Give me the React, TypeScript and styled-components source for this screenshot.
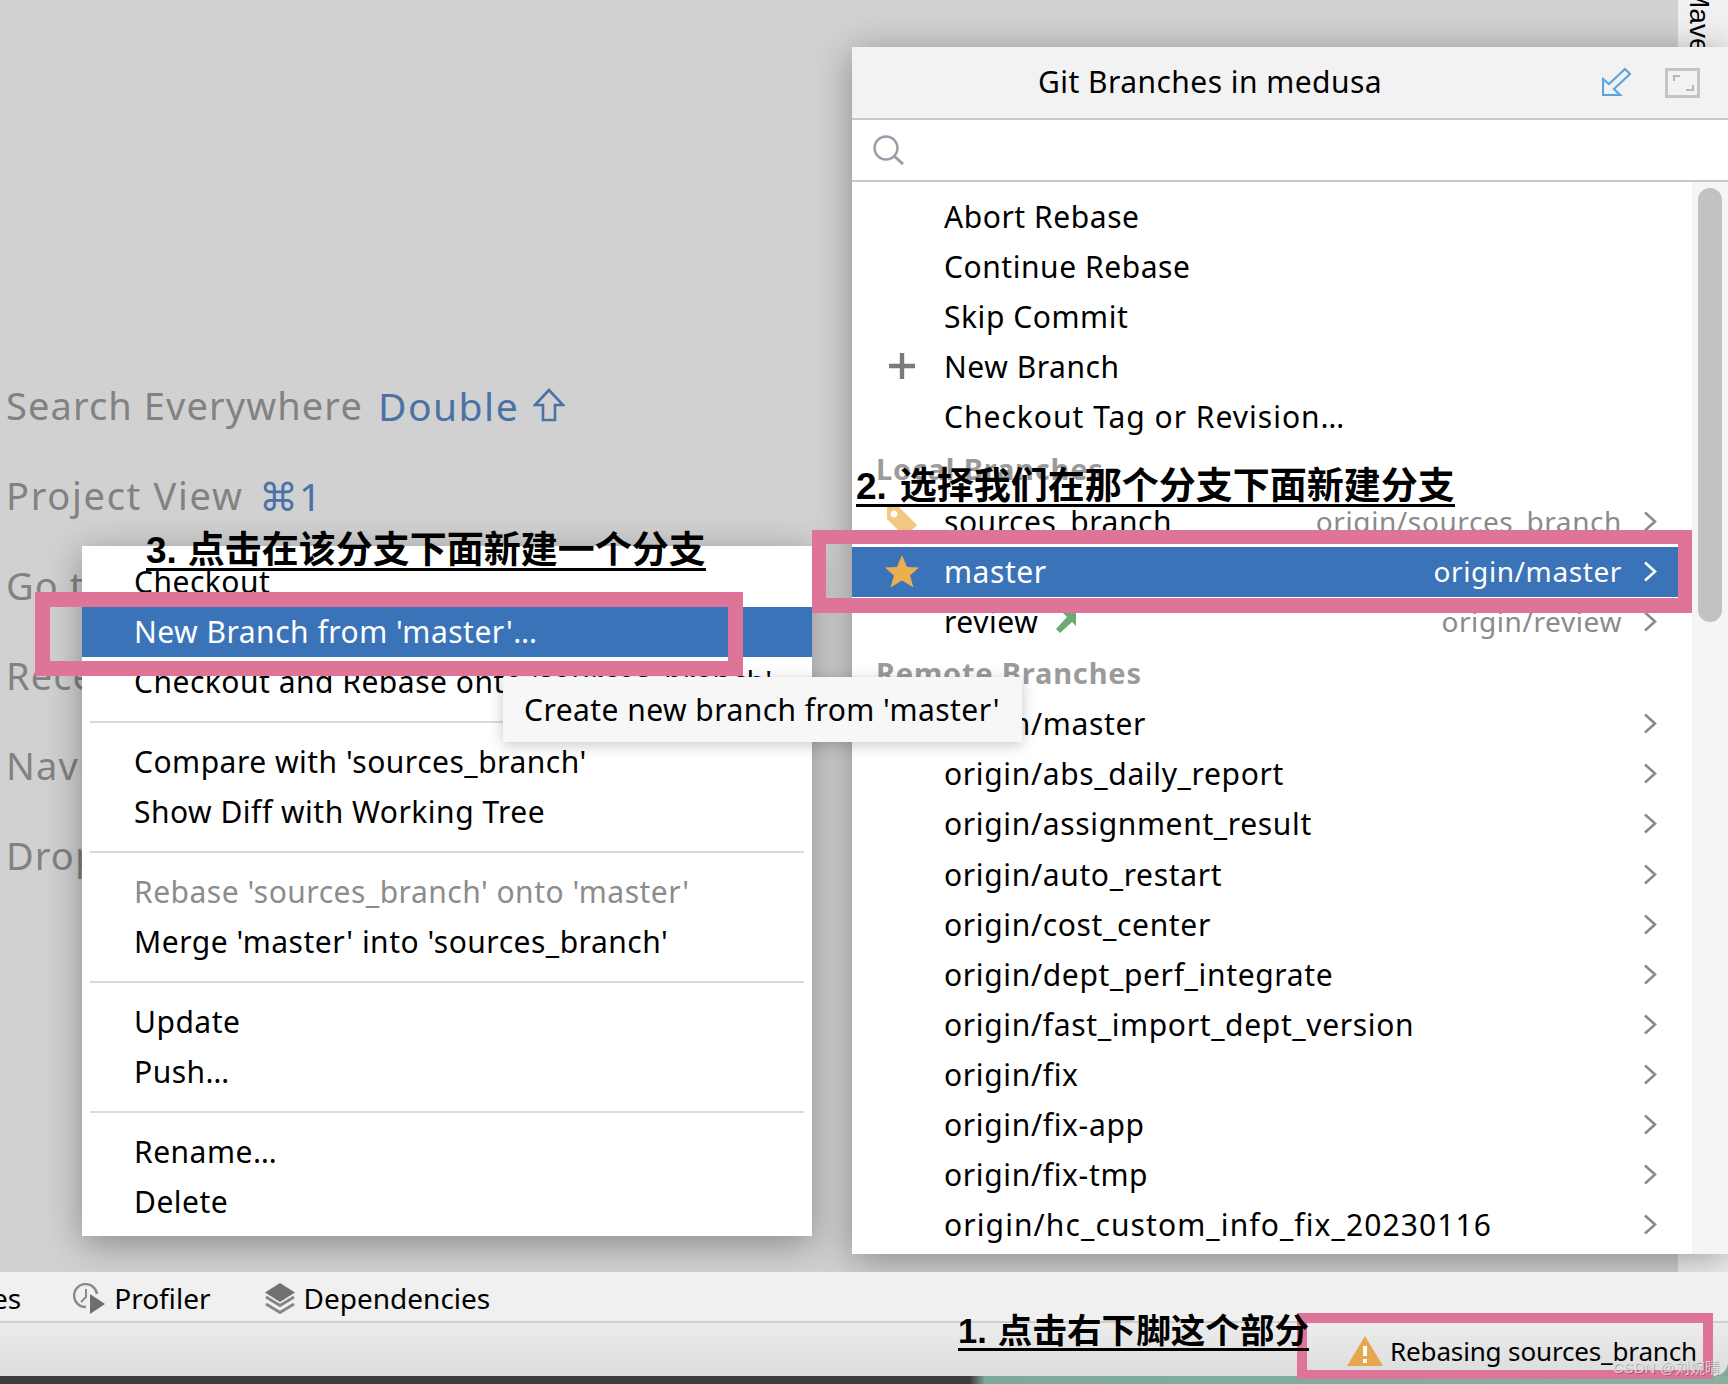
import React from "react";
import styled, { createGlobalStyle } from "styled-components";

const UI = `"Noto Sans", "Open Sans", sans-serif`;
const Global = createGlobalStyle`
  html, body { margin: 0; padding: 0; background: #d0d0d0; }
  #root { width: 1728px; height: 1384px; overflow: hidden; }
`;

const Page = styled.div`
  position: relative; width: 1728px; height: 1384px; overflow: hidden;
  display: flex; flex-direction: column; font-family: ${UI}; color: #000; background: #7fa898;
`;
const Workspace = styled.main`
  flex: 1; min-height: 0; background: #d1d1d1; display: flex;
`;
const Hints = styled.div`
  flex: 1; min-width: 0; padding: 360px 0 0 6px; display: flex; flex-direction: column;
`;
const Hint = styled.div<{ $track?: number }>`
  height: 90px; display: flex; align-items: center; gap: 15px; white-space: nowrap;
  font-size: 38px; letter-spacing: ${p => p.$track ?? 1.1}px; color: #828282;
`;
const Key = styled.span`
  color: #4a72a6; display: inline-flex; align-items: center; gap: 14px; letter-spacing: 1.5px; font-size: 39px;
`;
const SideStrip = styled.aside`
  position: relative; width: 50px; flex: none; background: #f0f0f0; overflow: hidden;
  font-family: "Liberation Sans", sans-serif; font-size: 28px;
`;
const MavenLabel = styled.span`
  position: absolute; left: 4px; top: -15px; writing-mode: vertical-rl; line-height: 34px;
`;
const ToolBar = styled.div`
  position: relative; z-index: 1; height: 51px; box-sizing: border-box; background: #f0f0f0; border-bottom: 2px solid #cfcfcf;
  display: flex; align-items: center; font-size: 28px; padding-top: 3px;
`;
const ToolItem = styled.div<{ $ml: number }>`
  margin-left: ${p => p.$ml}px; display: flex; align-items: center; gap: 9px; white-space: nowrap;
`;
const StatusBar = styled.div`
  position: relative; z-index: 1; height: 53px; box-sizing: border-box; background: linear-gradient(#ececec, #dcdcdc);
  border-bottom-right-radius: 14px;
  display: flex; align-items: center; justify-content: flex-end; padding: 3px 31px 0 0; gap: 7px;
  font-size: 26px; letter-spacing: -0.15px;
`;
const Strip = styled.div`
  height: 8px; background: linear-gradient(90deg, #3c3c3c 0 970px, #7fa898 985px, #86b3a0 100%);
`;
const Menu = styled.section`
  position: absolute; left: 82px; top: 546px; width: 730px; height: 690px; box-sizing: border-box;
  background: #fff; padding: 11px 0 10px; box-shadow: 0 8px 34px rgba(0,0,0,.34);
  font-size: 30px; letter-spacing: 0.5px;
`;
const MenuItem = styled.div<{ $active?: boolean; $disabled?: boolean }>`
  height: 50px; line-height: 50px; padding-left: 52px; white-space: nowrap;
  background: ${p => (p.$active ? "#3b73b8" : "transparent")};
  color: ${p => (p.$active ? "#fff" : p.$disabled ? "#8c8c8c" : "#000")};
`;
const Separator = styled.hr`
  margin: 14px 8px; border: 0; height: 2px; background: #d9d9d9;
`;
const Popup = styled.section`
  position: absolute; left: 852px; top: 47px; width: 876px; height: 1207px;
  display: flex; flex-direction: column; background: #fff; box-shadow: 0 6px 34px rgba(0,0,0,.34);
`;
const PopupHead = styled.header`
  height: 73px; box-sizing: border-box; flex: none; background: #f2f2f2; border-bottom: 2px solid #c8c8c8;
  display: flex; align-items: center; font-size: 30px; letter-spacing: 0.45px; padding-bottom: 3px;
`;
const PopupTitle = styled.div` margin-left: 186px; width: 564px; white-space: nowrap; `;
const HeadIcons = styled.div` display: flex; align-items: center; gap: 34px; margin-top: 3px; `;
const SearchBar = styled.div`
  height: 62px; box-sizing: border-box; flex: none; border-bottom: 2px solid #c8c8c8;
  display: flex; align-items: center; padding-left: 21px;
`;
const ListWrap = styled.div` flex: 1; min-height: 0; display: flex; `;
const List = styled.div`
  flex: 1; min-width: 0; padding-top: 9px; font-size: 30px; letter-spacing: 0.55px;
`;
const Track = styled.div` width: 36px; flex: none; background: #f5f5f5; padding: 6px 6px 0; box-sizing: border-box; `;
const Thumb = styled.div` height: 434px; border-radius: 12px; background: #c2c2c2; `;
const Row = styled.div<{ $active?: boolean; $track?: number }>`
  height: 50.1px; display: flex; align-items: center; white-space: nowrap;
  background: ${p => (p.$active ? "#3b73b8" : "transparent")};
  color: ${p => (p.$active ? "#fff" : "#000")};
  ${p => (p.$track ? `letter-spacing: ${p.$track}px;` : "")}
`;
const IconSlot = styled.div`
  width: 92px; flex: none; display: flex; justify-content: center; padding-left: 8px; box-sizing: border-box;
`;
const RowName = styled.div` display: flex; align-items: center; gap: 18px; flex: 1; `;
const Remote = styled.div<{ $active?: boolean }>`
  color: ${p => (p.$active ? "#fff" : "#8a8a8a")}; font-size: 28px; letter-spacing: 0.6px; line-height: 36px; margin-top: -2px;
`;
const ChevronSlot = styled.div` width: 56px; margin-right: 14px; flex: none; display: flex; justify-content: center; `;
const GroupTitle = styled.div<{ $h: number }>`
  height: ${p => p.$h}px; display: flex; align-items: center; padding-left: 24px; font-weight: 700;
  color: #9b9b9b; font-size: 29px; letter-spacing: 0.8px;
`;
const Tooltip = styled.div`
  position: absolute; left: 503px; top: 677px; width: 519px; height: 65px; box-sizing: border-box;
  background: #f7f7f7; display: flex; align-items: center; padding-left: 21px; white-space: nowrap;
  box-shadow: 0 3px 14px rgba(0,0,0,.22); font-size: 30px; letter-spacing: 0.45px;
`;
const PinkFrame = styled.div<{ $l: number; $t: number; $w: number; $h: number; $bx: number; $bt: number; $bb: number }>`
  position: absolute; left: ${p => p.$l}px; top: ${p => p.$t}px; width: ${p => p.$w}px; height: ${p => p.$h}px;
  box-sizing: border-box; border: solid #de7599; z-index: 2;
  border-width: ${p => p.$bt}px ${p => p.$bx}px ${p => p.$bb}px;
`;
const Note = styled.div<{ $l: number; $t: number; $size: number; $lh: number; $gap: number }>`
  position: absolute; z-index: 3; left: ${p => p.$l}px; top: ${p => p.$t}px; white-space: nowrap;
  font-family: "Liberation Sans", "Noto Sans CJK SC", sans-serif; font-weight: 700;
  font-size: ${p => p.$size}px; line-height: ${p => p.$lh}px;
  border-bottom: 3px solid #000; display: flex; gap: ${p => p.$gap}px;
`;
const Watermark = styled.div`
  position: absolute; z-index: 3; left: 1613px; top: 1360px; font-size: 14.5px; line-height: 16px; color: rgba(225,225,225,.85);
  white-space: nowrap; font-family: "Liberation Sans", "Noto Sans CJK SC", sans-serif; letter-spacing: .4px;
  text-shadow: 1px 1px 0 rgba(0,0,0,.25);
`;

const Chevron = ({ c = "#8a8a8a" }: { c?: string }) => (
  <svg width="14" height="21" viewBox="0 0 14 21"><path d="M2 1.5 L12 10.5 L2 19.5" fill="none" stroke={c} strokeWidth="2.6" /></svg>
);
const Star = () => (
  <svg width="34" height="33" viewBox="0 0 34 33"><path d="M17 0 L22 12 L34 12.5 L25 20.5 L28.5 32.5 L17 25.5 L5.5 32.5 L9 20.5 L0 12.5 L12 12 Z" fill="#ecaf50" /></svg>
);
const Tag = () => (
  <svg width="30" height="30" viewBox="0 0 30 30"><path fillRule="evenodd" d="M0 0 H12 L30 18 L18 30 L0 12 Z M7 3.5 a3.5 3.5 0 1 0 .01 0 Z" fill="#f2c77f" /></svg>
);
const Plus = () => (
  <svg width="26" height="26" viewBox="0 0 26 26"><path d="M13 0 V26 M0 13 H26" stroke="#7a7a7a" strokeWidth="4.4" /></svg>
);
const GreenArrow = () => (
  <svg width="21" height="24" viewBox="0 0 21 24"><path d="M5 1 H20 V16 L16 12 L4 23 L0 19 L11 7 Z" fill="#6aab73" /></svg>
);
const PinIcon = () => (
  <svg width="29" height="29" viewBox="-1 -1 29 29" fill="none" stroke="#5aa5db" strokeWidth="2.2">
    <path d="M22 0 L27 5 L11 20 L17 26 H0 V10 L6 15 Z" />
  </svg>
);
const ExpandIcon = () => (
  <svg width="35" height="30" viewBox="0 0 35 30" fill="none">
    <rect x="1.5" y="1.5" width="32" height="27" stroke="#c4c4c4" strokeWidth="3" /><path d="M9 13 V8 H15 M28 17 V22 H21" strokeWidth="2.2" stroke="#b8b8b8" />
  </svg>
);
const SearchIcon = () => (
  <svg width="31" height="30" viewBox="0 0 31 30" fill="none" stroke="#97a0a8" strokeWidth="2.4">
    <circle cx="13" cy="13" r="11.5" /><path d="M21 21 L30 29" strokeWidth="3" />
  </svg>
);
const ShiftIcon = () => (
  <svg width="32" height="34" viewBox="0 0 32 34" fill="none" stroke="#4a72a6" strokeWidth="2.6"><path d="M16 2 L30 17 H22 V32 H10 V17 H2 Z" /></svg>
);
const ProfilerIcon = () => (
  <svg width="32" height="31" viewBox="0 0 32 31" fill="none">
    <path d="M13 24 A 11.5 11.5 0 1 1 24 11" stroke="#8a8a8a" strokeWidth="2.4" />
    <path d="M13 6 V14 L8 19" stroke="#8a8a8a" strokeWidth="2" />
    <path d="M17 11 L32 21 L17 31 Z" fill="#6f6f6f" />
  </svg>
);
const DepsIcon = () => (
  <svg width="30" height="31" viewBox="0 0 30 31">
    <path d="M15 0 L30 9.5 L15 19 L0 9.5 Z" fill="#717171" />
    <path d="M1 14 L15 22.5 L29 14 M1 21 L15 29.5 L29 21" fill="none" stroke="#858585" strokeWidth="2.8" />
  </svg>
);
const Warning = () => (
  <svg width="36" height="30" viewBox="0 0 36 30"><path d="M18 0 L36 30 H0 Z" fill="#e3a850" /><path d="M16 10 H20 V20 H16 Z M16 23 H20 V27 H16 Z" fill="#fff" /></svg>
);

const topActions = ["Abort Rebase", "Continue Rebase", "Skip Commit", "New Branch", "Checkout Tag or Revision…"];
const remotes = ["origin/master", "origin/abs_daily_report", "origin/assignment_result", "origin/auto_restart", "origin/cost_center", "origin/dept_perf_integrate", "origin/fast_import_dept_version", "origin/fix", "origin/fix-app", "origin/fix-tmp", "origin/hc_custom_info_fix_20230116"];
const menuGroups = [
  ["Checkout", "New Branch from 'master'…", "Checkout and Rebase onto 'sources_branch'"],
  ["Compare with 'sources_branch'", "Show Diff with Working Tree"],
  ["Rebase 'sources_branch' onto 'master'", "Merge 'master' into 'sources_branch'"],
  ["Update", "Push…"],
  ["Rename…", "Delete"],
];

export default function App() {
  return (
    <Page>
      <Global />
      <Workspace>
        <Hints>
          <Hint>Search Everywhere <Key>Double <ShiftIcon /></Key></Hint>
          <Hint $track={1.7}>Project View <Key>⌘1</Key></Hint>
          <Hint>Go to File <Key>⇧⌘O</Key></Hint>
          <Hint>Recent Files <Key>⌘E</Key></Hint>
          <Hint>Navigation Bar <Key>⌘↑</Key></Hint>
          <Hint>Drop files here to open</Hint>
        </Hints>
        <SideStrip><MavenLabel>Maven</MavenLabel></SideStrip>
      </Workspace>
      <ToolBar>
        <ToolItem $ml={-37}>Files</ToolItem>
        <ToolItem $ml={52}><ProfilerIcon />Profiler</ToolItem>
        <ToolItem $ml={54}><DepsIcon />Dependencies</ToolItem>
      </ToolBar>
      <StatusBar><Warning />Rebasing sources_branch</StatusBar>
      <Strip />

      <Menu>
        {menuGroups.map((g, i) => (
          <React.Fragment key={i}>
            {i > 0 && <Separator />}
            {g.map(t => (
              <MenuItem key={t} $active={t.startsWith("New Branch")} $disabled={t.startsWith("Rebase")}>{t}</MenuItem>
            ))}
          </React.Fragment>
        ))}
      </Menu>

      <Popup>
        <PopupHead>
          <PopupTitle>Git Branches in medusa</PopupTitle>
          <HeadIcons><PinIcon /><ExpandIcon /></HeadIcons>
        </PopupHead>
        <SearchBar><SearchIcon /></SearchBar>
        <ListWrap>
          <List>
            {topActions.map(t => (
              <Row key={t} $track={t.startsWith("Checkout") ? 1 : undefined}>
                <IconSlot>{t === "New Branch" && <Plus />}</IconSlot><RowName>{t}</RowName>
              </Row>
            ))}
            <GroupTitle $h={55}>Local Branches</GroupTitle>
            <Row><IconSlot><Tag /></IconSlot><RowName>sources_branch</RowName><Remote>origin/sources_branch</Remote><ChevronSlot><Chevron /></ChevronSlot></Row>
            <Row $active><IconSlot><Star /></IconSlot><RowName>master</RowName><Remote $active>origin/master</Remote><ChevronSlot><Chevron c="#fff" /></ChevronSlot></Row>
            <Row><IconSlot /><RowName>review<GreenArrow /></RowName><Remote>origin/review</Remote><ChevronSlot><Chevron /></ChevronSlot></Row>
            <GroupTitle $h={52}>Remote Branches</GroupTitle>
            {remotes.map(t => (
              <Row key={t} $track={t.includes("2023") ? 1.1 : 0.65}><IconSlot /><RowName>{t}</RowName><ChevronSlot><Chevron /></ChevronSlot></Row>
            ))}
          </List>
          <Track><Thumb /></Track>
        </ListWrap>
      </Popup>

      <Tooltip>Create new branch from 'master'</Tooltip>

      <PinkFrame $l={812} $t={530} $w={880} $h={83} $bx={14} $bt={14} $bb={15} />
      <PinkFrame $l={35} $t={592} $w={708} $h={84} $bx={15} $bt={15} $bb={15} />
      <PinkFrame $l={1297} $t={1313} $w={416} $h={66} $bx={10} $bt={10} $bb={9} />

      <Note $l={146} $t={533} $size={37} $lh={35} $gap={11}><span>3.</span><span>点击在该分支下面新建一个分支</span></Note>
      <Note $l={856} $t={469} $size={37} $lh={35} $gap={13}><span>2.</span><span>选择我们在那个分支下面新建分支</span></Note>
      <Note $l={958} $t={1315} $size={34.6} $lh={33} $gap={11}><span>1.</span><span>点击右下脚这个部分</span></Note>
      <Watermark>CSDN @刘婉晴</Watermark>
    </Page>
  );
}
